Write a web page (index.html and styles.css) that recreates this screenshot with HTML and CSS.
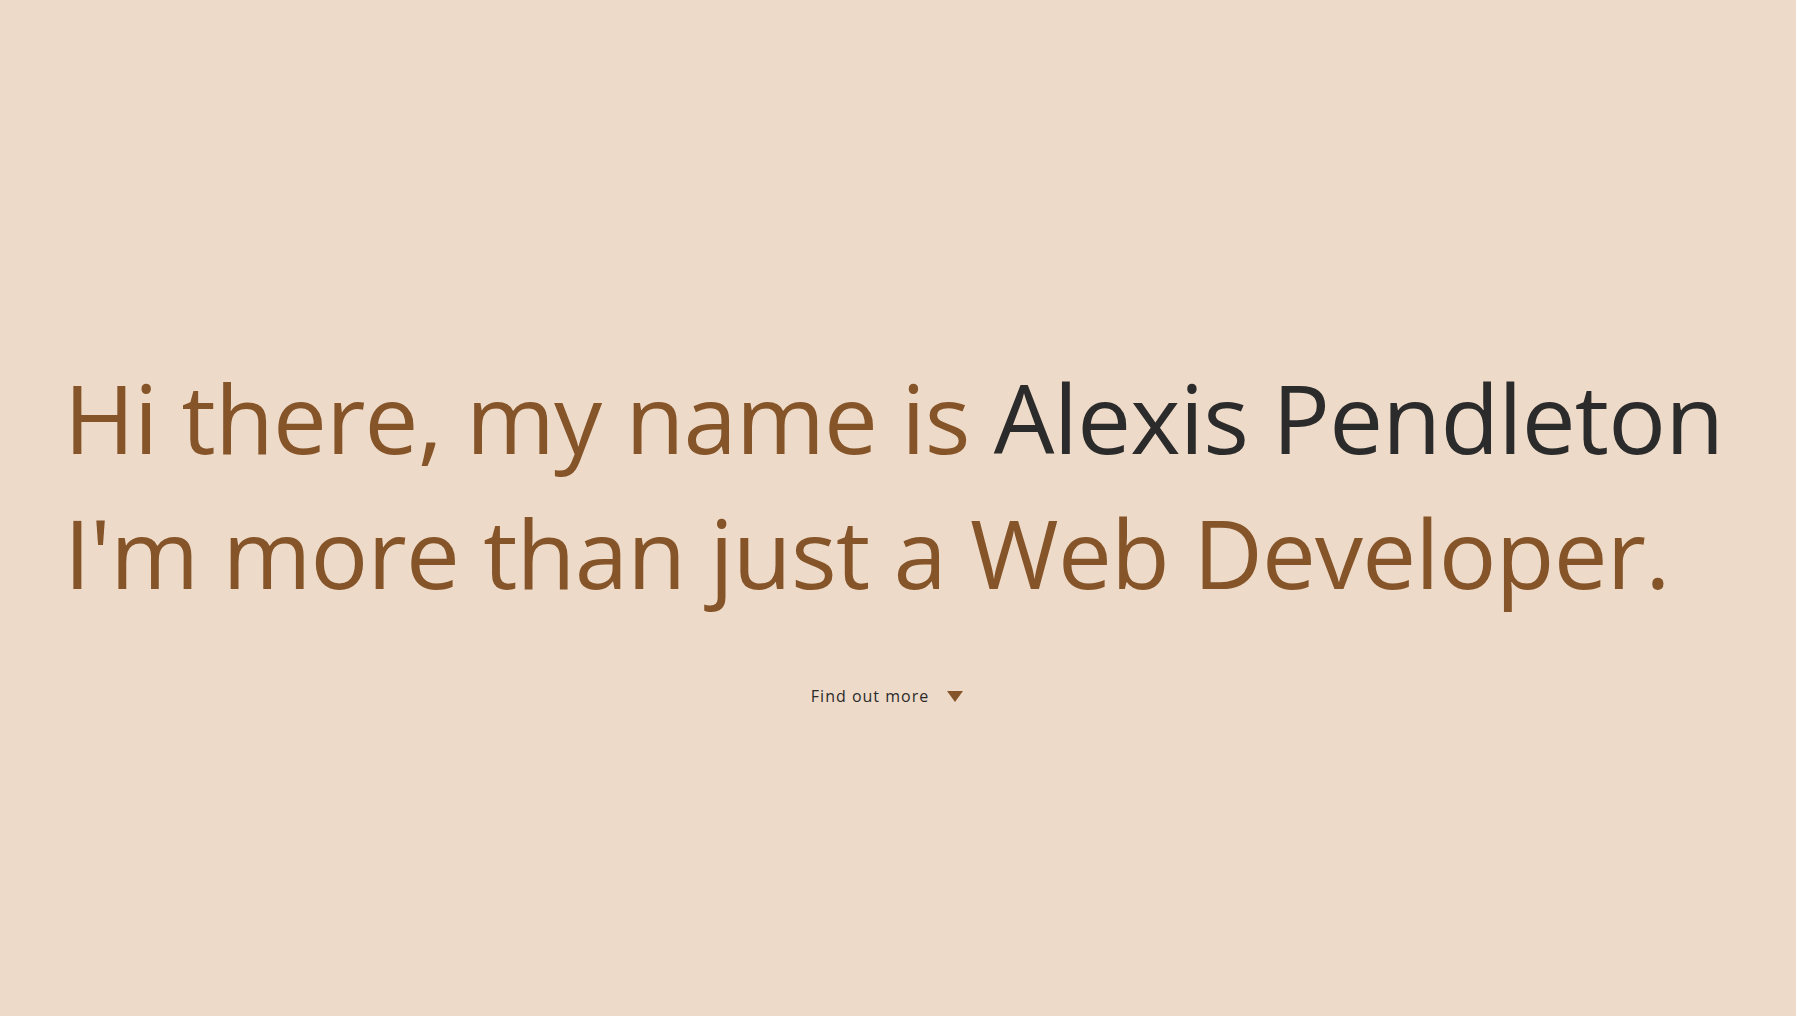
FILE: index.html
```html
<!DOCTYPE html>
<html lang="en">
<head>
<meta charset="utf-8">
<title>Alexis Pendleton</title>
<link rel="stylesheet" href="styles.css">
</head>
<body>
<main class="hero">
  <h1 class="headline">
    <span class="line">Hi there, my name is <span class="name">Alexis Pendleton</span></span>
    <span class="line">I'm more than just a Web Developer.</span>
  </h1>
  <a class="more" href="#about">Find out more <span class="arrow"></span></a>
</main>
</body>
</html>
```

FILE: styles.css
```css
html, body {
  margin: 0;
  padding: 0;
  height: 100%;
}
body {
  background: #eedac8;
  font-family: "Open Sans", "Noto Sans", sans-serif;
  color: #855429;
}
.hero {
  box-sizing: border-box;
  height: 100vh;
  display: flex;
  flex-direction: column;
  justify-content: center;
  padding: 40px 86px 0 64px;
}
.headline {
  margin: 0;
  font-weight: 400;
  font-size: 96px;
  line-height: 135px;
  letter-spacing: -0.8px;
  color: #855429;
}
.line {
  display: block;
  white-space: nowrap;
}
.name {
  color: #2b2b2b;
}
.more {
  align-self: center;
  margin-top: 66px;
  display: flex;
  align-items: center;
  gap: 18px;
  font-size: 16px;
  letter-spacing: 1px;
  color: #2b2b2b;
  text-decoration: none;
}
.arrow {
  width: 0;
  height: 0;
  border-left: 8px solid transparent;
  border-right: 8px solid transparent;
  border-top: 11px solid #855429;
}
```
